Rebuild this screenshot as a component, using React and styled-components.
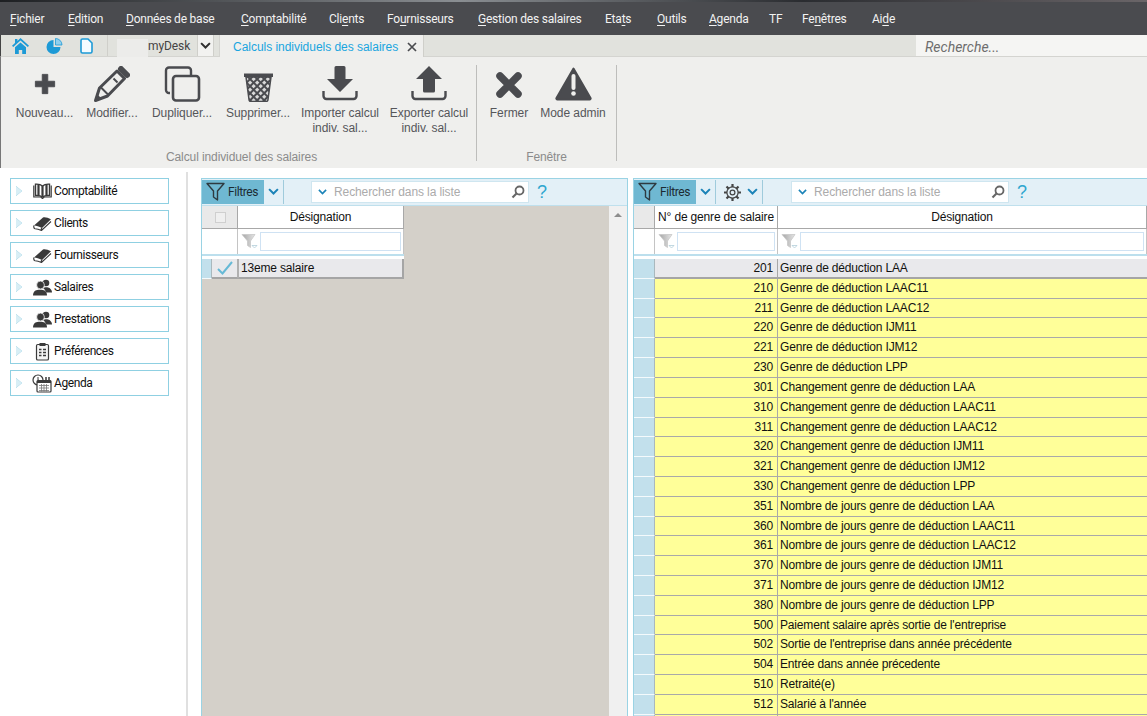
import React from 'react';
import styled, { createGlobalStyle } from 'styled-components';

const Global = createGlobalStyle`
  html, body { margin: 0; padding: 0; width: 1147px; height: 716px; overflow: hidden; background: #fff; }
  * { box-sizing: border-box; }
  input { font: inherit; }
`;
const Page = styled.div`
  width: 1147px; height: 716px; overflow: hidden; display: flex; flex-direction: column;
  font-family: "Liberation Sans", Arial, sans-serif; font-size: 12px; color: #111;
`;
const TopEdge = styled.div`height: 2px; background: linear-gradient(90deg,#1d1f22,#8a8e92 40%,#2a2c30 70%,#6a6568);`;
const MenuBar = styled.nav`
  height: 33px; background: #4a4b4f; display: flex; align-items: center; padding-left: 10px;
  font-family: Roboto, "Liberation Sans", sans-serif; font-size: 12px; letter-spacing: -.22px; color: #f2f2f2;
  & u { text-underline-offset: 2px; }
`;
const MenuItem = styled.span`white-space: nowrap; flex: none; width: ${p => p.$w}px;`;
const TabBar = styled.div`
  height: 22px; background: #e1e2dd; display: flex; align-items: stretch; border-bottom: 1px solid #d4d4d0;
  padding-left: 1px; border-left: 1px solid #444;
`;
const HomeIcons = styled.div`
  width: 106px; flex: none; display: flex; align-items: center; gap: 17px; padding-left: 10px;
  border-right: 1px solid #cfcfca;
`;
const BlankPatch = styled.div`width: 31px; flex: none; margin-left: 9px; background: #ececea; margin-top: 4px; margin-bottom: -2px;`;
const DeskLabel = styled.div`
  width: 49px; flex: none; display: flex; align-items: center; font-family: Roboto, sans-serif; color: #444; font-size: 12px; letter-spacing: -.1px;
`;
const DeskChevron = styled.div`
  width: 17px; flex: none; background: #f2f2f0; display: flex; align-items: center; justify-content: center;
  border-left: 1px solid #cfcfca; border-right: 1px solid #cfcfca;
`;
const ActiveTab = styled.div`
  margin-left: 5px; width: 205px; flex: none; background: #efefed; display: flex; align-items: center; padding: 2px 0 0 13px;
  color: #19a5df; white-space: nowrap; margin-bottom: -1px;
  border-left: 1px solid #d4d4d0; border-right: 1px solid #cfcfca; font-size: 12px; letter-spacing: -.03px;
`;
const TabSpacer = styled.div`flex: 1;`;
const SearchBox = styled.div`
  width: 231px; flex: none; background: #f5f5f3; padding: 2px 0 0 9px; display: flex; align-items: center;
  font-style: italic; color: #6e6e6e; font-size: 14px; font-family: Roboto, sans-serif;
`;
const Ribbon = styled.div`
  height: 111px; background: #efefed; display: flex; padding: 8px 0 0 10px; border-left: 1px solid #777;
`;
const RibbonGroup = styled.section`
  display: flex; flex-direction: column; height: 96px; border-right: 1px solid #bdbdbb; width: ${p => p.$w}px;
  flex: none;
`;
const RibbonButtons = styled.div`display: flex; flex: 1;`;
const RibbonBtn = styled.div`
  width: ${p => p.$w}px; flex: none; display: flex; flex-direction: column; align-items: center; text-align: center;
  color: #55565a; font-size: 12px; line-height: 15px; white-space: nowrap; letter-spacing: -.06px;
`;
const IconSlot = styled.div`height: 37px; padding-top: ${p => p.$top}px; display: flex; align-items: flex-start; justify-content: center; margin-bottom: 4px;`;
const GroupLabel = styled.div`text-align: center; color: #8b8b8b; font-size: 12px; letter-spacing: -.1px; height: 12px; line-height: 17px; padding-right: ${p => p.$pr || 0}px;`;
const Main = styled.main`flex: 1; display: flex; min-height: 0; background: #fff;`;
const Sidebar = styled.aside`
  width: 188px; flex: none; padding: 6px 0 0 10px; display: flex; flex-direction: column; gap: 6px;
  border-right: 2px solid #e0e0e0; margin-top: 4px;
`;
const SideItem = styled.div`
  width: 159px; height: 26px; border: 1px solid #8fd0e2; display: flex; align-items: center; background: #fff;
  font-family: Roboto, sans-serif; font-size: 12px; letter-spacing: -.42px; color: #111;
`;
const SideArrow = styled.span`
  width: 0; height: 0; margin-left: 5px; border-left: 6px solid #d8eef5; border-top: 5px solid transparent; border-bottom: 5px solid transparent;
  filter: drop-shadow(0 0 .6px #62b8d2);
`;
const SideIcon = styled.span`width: 20px; margin-left: 10px; margin-right: 2px; display: flex; justify-content: center;`;
const PanelArea = styled.div`flex: 1; display: flex; padding: 10px 0 0 13px; gap: 5px; min-width: 0;`;
const Panel = styled.section`
  width: ${p => p.$w}px; flex: none; height: 540px; border: 1px solid #9ad3e4; display: flex; flex-direction: column; overflow: hidden;
  ${p => p.$open && 'border-right: none;'}
`;
const Toolbar = styled.div`
  height: 27px; flex: none; background: #e3f0f7; display: flex; align-items: center; border-bottom: 1px solid #bfe0ed;
`;
const FilterBtn = styled.div`
  width: 62px; height: 24px; background: #6fb8d2; display: flex; align-items: center; padding-left: 4px; gap: 3px;
  font-family: Roboto, sans-serif; font-size: 12px; color: #1c2b33; letter-spacing: -.4px;
`;
const ChevWrap = styled.span`display: flex; width: ${p => p.$w || 19}px; justify-content: center;`;
const ToolSep = styled.span`width: 1px; height: 24px; background: #9fcbdc;`;
const GearWrap = styled.span`display: flex; margin-left: 8px; margin-right: 2px; color: #444;`;
const ListSearch = styled.div`
  width: 218px; height: 22px; margin-left: ${p => p.$ml}px; background: #fff; border: 1px solid #cfe6f0;
  display: flex; align-items: center; padding: 0 3px 0 6px; color: #ababab; gap: 7px; font-size: 12px; letter-spacing: -.1px;
`;
const SearchText = styled.span`flex: 1;`;
const Help = styled.span`
  margin-left: 8px; color: #2fa6cf; font-size: 18px; font-family: "Liberation Sans", sans-serif;
`;
const Grid = styled.div`flex: 1; min-height: 0; display: flex; background: ${p => p.$bg || '#fff'};`;
const GridBody = styled.div`flex: 1; min-width: 0; display: flex; flex-direction: column; letter-spacing: -.17px;`;
const Row = styled.div`display: flex; flex: none; height: ${p => p.$h}px; width: ${p => p.$w ? `${p.$w}px` : 'auto'};`;
const Corner = styled.div`
  width: ${p => p.$w}px; flex: none; background: #e9e9e9; border-right: 1px solid #a8a8a8; border-bottom: 1px solid #a8a8a8;
  display: flex; align-items: center; justify-content: center; padding-left: 2px;
`;
const CheckBox = styled.span`width: 11px; height: 11px; background: #efefef; border: 1px solid #cfcfcf;`;
const HeadCell = styled.div`
  flex: ${p => p.$w ? `0 0 ${p.$w}px` : 1}; min-width: 0; background: #fff; border-right: 1px solid #a8a8a8; border-bottom: 1px solid #a8a8a8;
  display: flex; align-items: center; justify-content: center; font-size: 12px; white-space: nowrap; overflow: hidden;
`;
const FilterGutter = styled.div`width: ${p => p.$w}px; flex: none; background: #fff; border-right: 1px solid #c4c4c4;`;
const FilterCell = styled.div`
  flex: ${p => p.$w ? `0 0 ${p.$w}px` : 1}; min-width: 0; background: #fff; border-right: 1px solid #c4c4c4; display: flex; align-items: center; gap: 2px; padding: 0 2px 0 3px;
`;
const FilterInput = styled.div`flex: 1; height: 19px; border: 1px solid #cfe2f3; background: #fff;`;
const BlueRule = styled.div`height: 5px; flex: none; border-top: 2px solid #bcdfed; background: #fff; width: ${p => p.$w ? `${p.$w}px` : 'auto'};`;
const Selector = styled.div`
  width: ${p => p.$w}px; flex: none; background: #c2e0ec; border-bottom: 1px solid #f4fafc; border-right: 1px solid #a9b8bd;
`;
const CheckCell = styled.div`
  width: 26px; flex: none; background: #e9e9ec; border-right: 1px solid #b0b0b0; border-bottom: 2px solid #a5a5a5; display: flex; align-items: center; justify-content: center;
`;
const NumCell = styled.div`
  width: ${p => p.$w}px; flex: none; padding-right: 4px; text-align: right; line-height: 19px; border-right: 1px solid #a8a8a8;
  background: ${p => p.$sel ? '#e9e9ec' : '#ffff99'}; border-bottom: ${p => p.$sel ? '2px solid #a5a5a5' : '1px solid #a9a9a9'};
`;
const TextCell = styled.div`
  flex: ${p => p.$w ? `0 0 ${p.$w}px` : 1}; min-width: 0; padding-left: 2px; line-height: 19px; white-space: nowrap; overflow: hidden;
  background: ${p => p.$sel ? '#e9e9ec' : '#ffff99'}; border-bottom: ${p => p.$sel ? '2px solid #a5a5a5' : '1px solid #a9a9a9'};
  ${p => p.$boxed && 'border-right: 2px solid #a5a5a5; border-left: 1px solid #b0b0b0;'}
`;
const ScrollBar = styled.div`
  width: 18px; flex: none; background: #f0f0f0; display: flex; justify-content: center; padding-top: 7px;
`;
const ScrollUp = styled.span`
  width: 0; height: 0; border-left: 4px solid transparent; border-right: 4px solid transparent; border-bottom: 4px solid #8d8d8d;
`;

const DARK = '#4a4b4f';
const Plus = () => <svg width="22" height="22" viewBox="0 0 24 24"><path d="M9 1.500h6V9h7.500v6H15v7.500H9V15H1.500V9H9z" fill={DARK} strokeLinejoin="round" stroke={DARK} strokeWidth="1"/></svg>;
const Pencil = () => <svg width="36" height="36" viewBox="0 0 36 36"><path d="M1.500 34.500 5.500 22 23 5l7.500 7.500L13.500 30z" fill="none" stroke={DARK} strokeWidth="3" strokeLinejoin="round"/><path d="M7 21.500l7 7M19.500 12.500l4 4" stroke={DARK} strokeWidth="2"/><path d="M1 35l2-7 5 5z" fill={DARK}/><path d="M27 3l6 6" stroke={DARK} strokeWidth="6" strokeLinecap="round"/></svg>;
const Duplicate = () => <svg width="37" height="36" viewBox="0 0 37 36"><path d="M6 27H5a3 3 0 0 1-3-3V4.500a3 3 0 0 1 3-3h19a3 3 0 0 1 3 3V9" fill="none" stroke={DARK} strokeWidth="2.400"/><rect x="9" y="10" width="26" height="24.500" rx="3" fill="none" stroke={DARK} strokeWidth="2.600"/></svg>;
const Trash = () => <svg width="31" height="30" viewBox="0 0 31 30"><defs><pattern id="mesh" width="5" height="5" patternUnits="userSpaceOnUse" patternTransform="rotate(45)"><rect width="5" height="5" fill={DARK}/><rect x="1" y="1" width="3" height="3" fill="#d9d9d9"/></pattern></defs><path d="M1 1.500h29v3.500H1z" fill={DARK}/><path d="M3 5h25l-3 22.500a2 2 0 0 1-2 2H8a2 2 0 0 1-2-2z" fill="url(#mesh)" stroke={DARK} strokeWidth="1.500"/></svg>;
const Tray = () => <path d="M1.500 25v5a3 3 0 0 0 3 3h27a3 3 0 0 0 3-3v-5" fill="none" stroke={DARK} strokeWidth="2.400"/>;
const Download = () => <svg width="36" height="35" viewBox="0 0 36 35"><path d="M12.500 1.500a1.500 1.500 0 0 1 1.500-1.500h8a1.500 1.500 0 0 1 1.500 1.500V13H31L18 26 5 13h7.500z" fill={DARK}/><Tray/></svg>;
const Upload = () => <svg width="36" height="35" viewBox="0 0 36 35"><path d="M18 0 31 13h-7v12a1.500 1.500 0 0 1-1.500 1.500h-9A1.500 1.500 0 0 1 12 25V13H5z" fill={DARK}/><Tray/></svg>;
const Cross = () => <svg width="28" height="28" viewBox="0 0 28 28"><path d="M5 5l18 18M23 5 5 23" stroke={DARK} strokeWidth="7.500" strokeLinecap="round"/></svg>;
const Warn = () => <svg width="37" height="34" viewBox="0 0 37 34"><path d="M18.500 1.500 35.500 31a1 1 0 0 1-1 1.500h-32a1 1 0 0 1-1-1.500z" fill={DARK} stroke={DARK} strokeWidth="2" strokeLinejoin="round"/><path d="M18.500 9v12" stroke="#efefed" strokeWidth="4" strokeLinecap="round"/><circle cx="18.500" cy="26.500" r="2.300" fill="#efefed"/></svg>;

const Home = () => <svg width="17" height="16" viewBox="0 0 17 16"><path d="M8.500 0 17 7.800l-1.200 1.300L8.500 2.600 1.200 9.100 0 7.800 3 5V1h2.400v1.900z" fill="#1d9ad6"/><path d="M3 9.200 8.500 4.500 14 9.200V16h-3.800v-4H6.800v4H3z" fill="#1d9ad6"/></svg>;
const Pie = () => <svg width="17" height="16" viewBox="0 0 17 16"><path d="M7.500 2A7 7 0 1 0 14.500 9H7.500z" fill="#1d9ad6"/><path d="M9.500 .5A6.500 6.500 0 0 1 16 7H9.500z" fill="#8fcfee" stroke="#1d9ad6" strokeWidth=".8"/></svg>;
const Doc = () => <svg width="13" height="16" viewBox="0 0 13 16"><path d="M1 2.500A1.500 1.500 0 0 1 2.500 1H8l4 4v8.500a1.500 1.500 0 0 1-1.500 1.500h-8A1.500 1.500 0 0 1 1 13.500z" fill="#f4fbff" stroke="#1d9ad6" strokeWidth="1.600"/></svg>;
const Chev = ({ c = '#2f2f2f', s = 11, w = 1.8 }) => <svg width={s} height={s * .7} viewBox="0 0 10 7"><path d="M1 1l4 4 4-4" fill="none" stroke={c} strokeWidth={w}/></svg>;
const TabX = () => <svg width="10" height="10" viewBox="0 0 10 10" style={{ marginLeft: 9 }}><path d="M1 1l8 8M9 1 1 9" stroke="#4a4b4f" strokeWidth="1.700"/></svg>;

const Funnel = () => <svg width="19" height="20" viewBox="0 0 19 20"><path d="M1 1.500h17L11.500 9v9l-4-3V9z" fill="none" stroke="#2e3a40" strokeWidth="1.400" strokeLinejoin="round"/></svg>;
const Magnifier = () => <svg width="14" height="14" viewBox="0 0 14 14"><circle cx="8.500" cy="5.500" r="4" fill="none" stroke="#666" strokeWidth="1.800"/><path d="M5.500 8.500 1.500 12.500" stroke="#666" strokeWidth="2.200"/></svg>;
const Gear = () => <svg width="17" height="17" viewBox="0 0 17 17"><g stroke="#444" strokeWidth="2.200"><path d="M8.500 0v17M0 8.500h17M2.500 2.500l12 12M14.500 2.500l-12 12"/></g><circle cx="8.500" cy="8.500" r="5.600" fill="#e3f0f7" stroke="#444" strokeWidth="1.200"/><circle cx="8.500" cy="8.500" r="2.400" fill="none" stroke="#444" strokeWidth="1.200"/></svg>;
const MiniFunnel = () => <svg width="17" height="17" viewBox="0 0 17 17"><defs><linearGradient id="mf" x1="0" x2="1"><stop offset="0" stopColor="#a5a5a5"/><stop offset="1" stopColor="#e6e6e6"/></linearGradient></defs><path d="M1 1.500h13L9.500 8v6.500l-3-2V8z" fill="url(#mf)" stroke="#c8c8c8" strokeWidth=".8"/><path d="M11 12.500h5l-2.500 2.500z" fill="#fff" stroke="#a9c8d6" strokeWidth=".7"/></svg>;
const Check = () => <svg width="16" height="14" viewBox="0 0 16 14"><path d="M1 8l4.500 4.500L15 1" fill="none" stroke="#66b9d6" strokeWidth="2"/></svg>;

const SIC = '#3a3a3a';
const BookOpen = () => <svg width="19" height="16" viewBox="0 0 19 16"><path d="M9.500 3C7.500 1.200 5 1 2.500 1.200V12.500c2.500-.2 5 0 7 1.500 2-1.500 4.500-1.700 7-1.500V1.200C14 1 11.500 1.200 9.500 3z" fill="none" stroke={SIC} strokeWidth="1.400"/><path d="M5.500 1.500v11M13.500 1.500v11M9.500 3v11" stroke={SIC} strokeWidth="2.200"/><path d="M.8 2.500v11.500h7l1.700 1.500 1.700-1.500h7V2.500" fill="none" stroke={SIC} strokeWidth="1.200"/></svg>;
const BookClosed = () => <svg width="19" height="15" viewBox="0 0 19 15"><path d="M1 9.500 10 1.500c1.800-.8 5 .2 8 1.800L9 12c-3-1.500-5.500-2.500-8-2.500z" fill={SIC}/><path d="M1 9.500c-.5 1.500 0 2.800 1 3.200 2.500 0 4.500.8 6.500 1.800L18 5.500M9 12c-.8.800-1 1.800-.5 2.500" fill="none" stroke={SIC} strokeWidth="1.100"/></svg>;
const People = () => <svg width="19" height="17" viewBox="0 0 19 17"><circle cx="13" cy="4" r="3.300" fill={SIC}/><path d="M10 9c1.500-1 5-1.200 6.500 0S19 11.500 19 13.500h-6C12.500 11.500 11.500 10 10 9z" fill={SIC}/><circle cx="7.500" cy="6" r="3.900" fill={SIC} stroke="#fff" strokeWidth=".7"/><path d="M0 16.500c0-2.500 1-4 2.500-5s7.500-1 9 0 2.500 2.500 2.500 5z" fill={SIC}/></svg>;
const Clip = () => <svg width="15" height="19" viewBox="0 0 15 19"><rect x="1.500" y="2.500" width="12" height="15.500" rx="1.300" fill="#f5f5f5" stroke={SIC} strokeWidth="1.200"/><rect x="4.500" y="1" width="6" height="3" fill={SIC}/><path d="M4 7.500h2.500M8 7.500h3M4 10.500h2.500M8 10.500h3M4 13.500h2.500M8 13.500h3" stroke={SIC} strokeWidth="1.500"/></svg>;
const Agenda = () => <svg width="20" height="19" viewBox="0 0 20 19"><circle cx="6" cy="6" r="5" fill="#fff" stroke={SIC} strokeWidth="1.200"/><path d="M6 3v3l2 1" stroke={SIC} fill="none"/><rect x="5" y="6.500" width="14" height="11.500" rx="1" fill="#fff" stroke={SIC} strokeWidth="1.200"/><rect x="5" y="6.500" width="14" height="2.500" fill={SIC}/><path d="M7 11.500h10M7 14h10M7 16.500h10M9.500 10v7.500M12 10v7.500M14.500 10v7.500" stroke="#777" strokeWidth=".8"/><path d="M14 3v3M17 3v3" stroke={SIC} strokeWidth="1.500"/></svg>;

const menus = [
  { w: 58, a: '', u: 'F', z: 'ichier' }, { w: 58, a: '', u: 'E', z: 'dition' }, { w: 115, a: '', u: 'D', z: 'onnées de base' },
  { w: 88, a: '', u: 'C', z: 'omptabilité' }, { w: 58, a: 'Cli', u: 'e', z: 'nts' }, { w: 91, a: 'Fo', u: 'u', z: 'rnisseurs' },
  { w: 127, a: '', u: 'G', z: 'estion des salaires' }, { w: 52, a: 'Eta', u: 't', z: 's' }, { w: 52, a: '', u: 'O', z: 'utils' },
  { w: 60, a: '', u: 'A', z: 'genda' }, { w: 33, a: 'TF', u: '', z: '' }, { w: 70, a: 'Fe', u: 'n', z: 'êtres' }, { w: 40, a: 'Ai', u: 'd', z: 'e' },
];
const sideItems = [['Comptabilité',<BookOpen/>],['Clients',<BookClosed/>],['Fournisseurs',<BookClosed/>],['Salaires',<People/>],['Prestations',<People/>],['Préférences',<Clip/>],['Agenda',<Agenda/>]];
const rows = [[201,'Genre de déduction LAA'],[210,'Genre de déduction LAAC11'],[211,'Genre de déduction LAAC12'],[220,'Genre de déduction IJM11'],[221,'Genre de déduction IJM12'],[230,'Genre de déduction LPP'],[301,'Changement genre de déduction LAA'],[310,'Changement genre de déduction LAAC11'],[311,'Changement genre de déduction LAAC12'],[320,'Changement genre de déduction IJM11'],[321,'Changement genre de déduction IJM12'],[330,'Changement genre de déduction LPP'],[351,'Nombre de jours genre de déduction LAA'],[360,'Nombre de jours genre de déduction LAAC11'],[361,'Nombre de jours genre de déduction LAAC12'],[370,'Nombre de jours genre de déduction IJM11'],[371,'Nombre de jours genre de déduction IJM12'],[380,'Nombre de jours genre de déduction LPP'],[500,"Paiement salaire après sortie de l'entreprise"],[502,"Sortie de l'entreprise dans année précédente"],[504,'Entrée dans année précedente'],[510,'Retraité(e)'],[512,"Salarié à l'année"],[520,'']];

export default function App() {
  return (
    <Page>
      <Global/>
      <TopEdge/>
      <MenuBar>
        {menus.map(m => <MenuItem key={m.a + m.u + m.z} $w={m.w}>{m.a}<u>{m.u}</u>{m.z}</MenuItem>)}
      </MenuBar>
      <TabBar>
        <HomeIcons><Home/><Pie/><Doc/></HomeIcons>
        <BlankPatch/>
        <DeskLabel>myDesk</DeskLabel>
        <DeskChevron><Chev/></DeskChevron>
        <ActiveTab>Calculs individuels des salaires<TabX/></ActiveTab>
        <TabSpacer/>
        <SearchBox>Recherche...</SearchBox>
      </TabBar>
      <Ribbon>
        <RibbonGroup $w={466}>
          <RibbonButtons>
            <RibbonBtn $w={67}><IconSlot $top={8}><Plus/></IconSlot>Nouveau...</RibbonBtn>
            <RibbonBtn $w={68}><IconSlot $top={1}><Pencil/></IconSlot>Modifier...</RibbonBtn>
            <RibbonBtn $w={72}><IconSlot $top={1}><Duplicate/></IconSlot>Dupliquer...</RibbonBtn>
            <RibbonBtn $w={80}><IconSlot $top={7}><Trash/></IconSlot>Supprimer...</RibbonBtn>
            <RibbonBtn $w={84}><IconSlot $top={1}><Download/></IconSlot>Importer calcul<br/>indiv. sal...</RibbonBtn>
            <RibbonBtn $w={94}><IconSlot $top={1}><Upload/></IconSlot>Exporter calcul<br/>indiv. sal...</RibbonBtn>
          </RibbonButtons>
          <GroupLabel $pr={4}>Calcul individuel des salaires</GroupLabel>
        </RibbonGroup>
        <RibbonGroup $w={140}>
          <RibbonButtons>
            <RibbonBtn $w={64}><IconSlot $top={6}><Cross/></IconSlot>Fermer</RibbonBtn>
            <RibbonBtn $w={64}><IconSlot $top={2}><Warn/></IconSlot>Mode admin</RibbonBtn>
          </RibbonButtons>
          <GroupLabel>Fenêtre</GroupLabel>
        </RibbonGroup>
      </Ribbon>
      <Main>
        <Sidebar>
          {sideItems.map(([t, ic]) => <SideItem key={t}><SideArrow/><SideIcon>{ic}</SideIcon>{t}</SideItem>)}
        </Sidebar>
        <PanelArea>
          <Panel $w={427}>
            <Toolbar>
              <FilterBtn><Funnel/>Filtres</FilterBtn>
              <ChevWrap><Chev c="#1b83b8" /></ChevWrap>
              <ToolSep/>
              <ListSearch $ml={27}><Chev c="#1b83b8" s={9}/><SearchText>Rechercher dans la liste</SearchText><Magnifier/></ListSearch>
              <Help>?</Help>
            </Toolbar>
            <Grid $bg="#d4d0c9">
              <GridBody>
                <Row $h={23} $w={202}><Corner $w={36}><CheckBox/></Corner><HeadCell>Désignation</HeadCell></Row>
                <Row $h={25} $w={202}><FilterGutter $w={36}/><FilterCell><MiniFunnel/><FilterInput/></FilterCell></Row>
                <BlueRule $w={202}/>
                <Row $h={20} $w={202}><Selector $w={10}/><CheckCell><Check/></CheckCell><TextCell $sel $boxed>13eme salaire</TextCell></Row>
              </GridBody>
              <ScrollBar><ScrollUp/></ScrollBar>
            </Grid>
          </Panel>
          <Panel $w={514} $open>
            <Toolbar>
              <FilterBtn><Funnel/>Filtres</FilterBtn>
              <ChevWrap><Chev c="#1b83b8"/></ChevWrap>
              <ToolSep/>
              <GearWrap><Gear/></GearWrap>
              <ChevWrap><Chev c="#1b83b8"/></ChevWrap>
              <ToolSep/>
              <ListSearch $ml={28}><Chev c="#1b83b8" s={9}/><SearchText>Rechercher dans la liste</SearchText><Magnifier/></ListSearch>
              <Help>?</Help>
            </Toolbar>
            <Grid>
              <GridBody>
                <Row $h={23}><Corner $w={21}/><HeadCell $w={123}>N° de genre de salaire</HeadCell><HeadCell>Désignation</HeadCell></Row>
                <Row $h={25}><FilterGutter $w={21}/><FilterCell $w={123}><MiniFunnel/><FilterInput/></FilterCell><FilterCell><MiniFunnel/><FilterInput/></FilterCell></Row>
                <BlueRule/>
                {rows.map(([n, t], i) => (
                  <Row $h={19.82} key={n}>
                    <Selector $w={21}/>
                    <NumCell $w={123} $sel={i === 0}>{n === 520 ? '' : n}</NumCell>
                    <TextCell $sel={i === 0}>{t}</TextCell>
                  </Row>
                ))}
              </GridBody>
            </Grid>
          </Panel>
        </PanelArea>
      </Main>
    </Page>
  );
}
